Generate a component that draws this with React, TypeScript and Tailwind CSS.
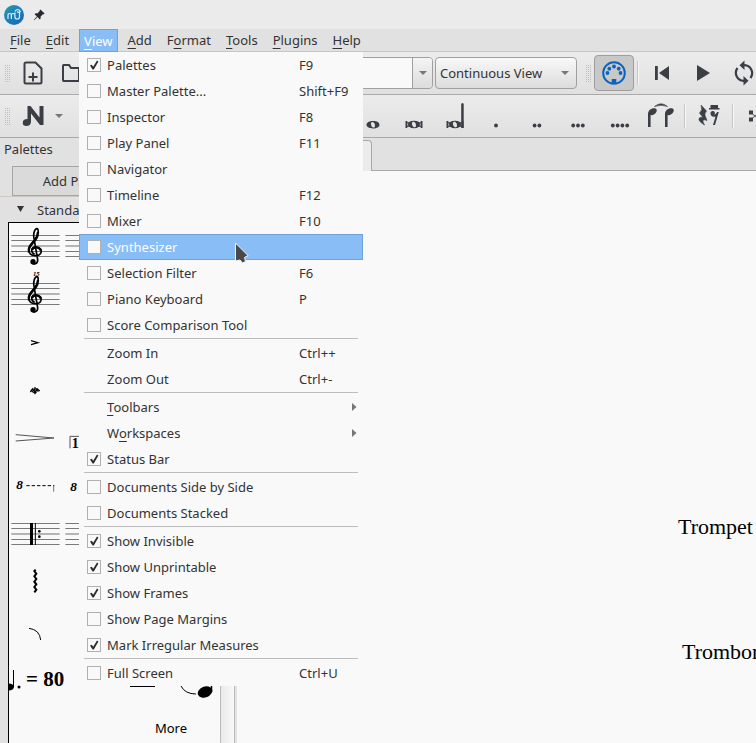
import type { ReactNode } from 'react';
import { BsPinAngleFill } from 'react-icons/bs';

type Entry = { label: string; key?: string; checked?: boolean; active?: boolean; sub?: boolean; plain?: boolean; mnemonic?: number };

const viewMenu: Entry[][] = [
  [
    { label: 'Palettes', key: 'F9', checked: true },
    { label: 'Master Palette...', key: 'Shift+F9' },
    { label: 'Inspector', key: 'F8' },
    { label: 'Play Panel', key: 'F11' },
    { label: 'Navigator' },
    { label: 'Timeline', key: 'F12' },
    { label: 'Mixer', key: 'F10' },
    { label: 'Synthesizer', active: true },
    { label: 'Selection Filter', key: 'F6' },
    { label: 'Piano Keyboard', key: 'P' },
    { label: 'Score Comparison Tool' },
  ],
  [
    { label: 'Zoom In', key: 'Ctrl++', plain: true },
    { label: 'Zoom Out', key: 'Ctrl+-', plain: true },
  ],
  [
    { label: 'Toolbars', plain: true, sub: true, mnemonic: 0 },
    { label: 'Workspaces', plain: true, sub: true, mnemonic: 1 },
    { label: 'Status Bar', checked: true },
  ],
  [{ label: 'Documents Side by Side' }, { label: 'Documents Stacked' }],
  [
    { label: 'Show Invisible', checked: true },
    { label: 'Show Unprintable', checked: true },
    { label: 'Show Frames', checked: true },
    { label: 'Show Page Margins' },
    { label: 'Mark Irregular Measures', checked: true },
  ],
  [{ label: 'Full Screen', key: 'Ctrl+U' }],
];

function Mnemonic({ text, at }: { text: string; at?: number }) {
  if (at === undefined) return <span>{text}</span>;
  return (
    <span>
      {text.slice(0, at)}
      <span className="underline decoration-1 underline-offset-3">{text[at]}</span>
      {text.slice(at + 1)}
    </span>
  );
}

function MenuRow({ entry }: { entry: Entry }) {
  const row = 'grid h-[26px] w-full grid-cols-[20px_192px_1fr_auto] items-center border pl-[7px] pr-[5px] text-left';
  if (entry.plain) {
    return (
      <button type="button" role="menuitem" className={`${row} border-transparent`}>
        <span />
        <Mnemonic text={entry.label} at={entry.mnemonic} />
        <span>{entry.key}</span>
        {entry.sub && (
          <svg width="5" height="8" viewBox="0 0 5 8" aria-hidden="true"><path d="M0 0l4.500 4-4.500 4z" fill="#777" /></svg>
        )}
      </button>
    );
  }
  return (
    <label className={`${row} ${entry.active ? 'border-[#6fa3d8] bg-[#89bdf6] text-white' : 'border-transparent'}`}>
      <span className="grid size-[14px] items-center justify-items-center">
        <input
          type="checkbox"
          defaultChecked={entry.checked}
          className="peer col-start-1 row-start-1 size-[14px] appearance-none border border-[#b0b0b0] bg-[#f9f9f9]"
        />
        <svg className="pointer-events-none invisible col-start-1 row-start-1 peer-checked:visible" width="14" height="14" viewBox="0 0 14 14" aria-hidden="true">
          <path d="M3 7.5L4.8 6.7 6.2 8.8 10 2.6 11.4 3.4 6.8 11.5H5.6Z" fill="#2b2b2b" />
        </svg>
      </span>
      <span>{entry.label}</span>
      <span>{entry.key}</span>
    </label>
  );
}

const menus: { label: string; at: number }[] = [
  { label: 'File', at: 0 },
  { label: 'Edit', at: 0 },
  { label: 'View', at: 0 },
  { label: 'Add', at: 0 },
  { label: 'Format', at: 1 },
  { label: 'Tools', at: 0 },
  { label: 'Plugins', at: 0 },
  { label: 'Help', at: 0 },
];

function MenuBar() {
  return (
    <nav className="flex h-[23px] shrink-0 gap-[5px] border-b border-[#c6c6c6] bg-[#e1e1e1] pl-[5px]">
      {menus.map((m) =>
        m.label === 'View' ? (
          <div key={m.label} className="relative h-[23px]">
            <button type="button" className="h-[23px] border border-[#6fa3d8] bg-[#89bdf6] px-1 text-white">
              <Mnemonic text={m.label} at={m.at} />
            </button>
            <div role="menu" className="absolute left-0 top-full z-10 w-[284px] bg-[#f9f9f9]">
              {viewMenu.map((group, i) => (
                <div key={i}>
                  {i > 0 && <hr className="mx-[5px] mb-px border-[#bdbdbd]" />}
                  {group.map((e) => <MenuRow key={e.label} entry={e} />)}
                </div>
              ))}
              <svg className="absolute left-[155px] top-[189px]" width="16" height="24" viewBox="0 0 16 24" aria-hidden="true">
                <path d="M1.500 2V20L6 19 8.500 22 11.500 20.500 10.500 16.500 14 14.500Z" fill="#4a4a4a" stroke="#f4f4f4" strokeWidth="1" />
              </svg>
            </div>
          </div>
        ) : (
          <button key={m.label} type="button" className="h-[22px] px-[5px]">
            <Mnemonic text={m.label} at={m.at} />
          </button>
        ),
      )}
    </nav>
  );
}

function Grip() {
  return (
    <svg className="shrink-0" width="5" height="17" viewBox="0 0 5 17" aria-hidden="true">
      {[0, 2, 4].map((x) => [0, 2, 4, 6, 8, 10, 12, 14, 16].map((y) => <rect key={`${x}-${y}`} x={x} y={y} width="1" height="1" fill="#bcbcbc" />))}
    </svg>
  );
}

function Divider() {
  return <span className="mx-[3px] h-6 w-[2px] shrink-0 border-l border-[#c6c6c6] bg-[#f8f8f8]" />;
}

function Tool({ label, className = 'w-[41px]', children }: { label: string; className?: string; children: ReactNode }) {
  return (
    <button type="button" aria-label={label} className={`flex h-9 shrink-0 items-center justify-center text-[#3b3e45] ${className}`}>
      {children}
    </button>
  );
}

function Down() {
  return <svg width="8" height="4" viewBox="0 0 8 4" aria-hidden="true"><path d="M0 0h8L4 4z" fill="#777" /></svg>;
}

const toolbar = 'flex h-[43px] shrink-0 items-center overflow-hidden border-b border-[#a9a9a9] bg-linear-to-b from-[#ececec] to-[#e0e0e0] pl-[5px]';

function FileToolbar() {
  return (
    <div className={toolbar}>
      <Grip />
      <Tool label="New" className="ml-1 w-[38px]">
        <svg width="20" height="24" viewBox="0 0 20 24" fill="none" stroke="currentColor" strokeWidth="2">
          <path d="M3 1.500H12.500L18.500 7.500V21Q18.500 22.500 17 22.500H3Q1.500 22.500 1.500 21V3Q1.500 1.500 3 1.500ZM10 11.500V20.500M5.500 16H14.500" />
        </svg>
      </Tool>
      <Tool label="Open" className="w-[38px]">
        <svg width="20" height="20" viewBox="0 0 20 20" fill="none" stroke="currentColor" strokeWidth="2">
          <path d="M2.500 2H8L10 5H18V18H2.500Q2 18 2 17V3Q2 2 2.500 2Z" />
        </svg>
      </Tool>
      <div className="ml-60 flex h-8 w-[103px] shrink-0 overflow-hidden rounded-sm border border-[#a0a0a0]">
        <input type="text" aria-label="Zoom" className="min-w-0 flex-1 bg-[#f9f9f9] px-1" />
        <button type="button" aria-label="Zoom levels" className="flex w-5 items-center justify-center border-l border-[#a0a0a0] bg-linear-to-b from-[#f4f4f4] to-[#dcdcdc]"><Down /></button>
      </div>
      <div className="ml-[2px] grid shrink-0 items-center">
        <select aria-label="View mode" className="col-start-1 row-start-1 h-8 w-[142px] appearance-none rounded-sm border border-[#a0a0a0] bg-linear-to-b from-[#f9f9f9] to-[#dcdcdc] pl-1">
          <option>Continuous View</option>
          <option>Page View</option>
        </select>
        <span className="pointer-events-none col-start-1 row-start-1 mr-2 justify-self-end"><Down /></span>
      </div>
      <span className="w-[9px] shrink-0" />
      <Grip />
      <Tool label="MIDI input" className="ml-[3px] w-10 rounded-sm border border-[#9d9d9d] bg-[#c8c8c8]">
        <svg width="24" height="24" viewBox="0 0 24 24" fill="#0a63bd">
          <circle cx="12" cy="12" r="10.800" fill="none" stroke="#0a63bd" strokeWidth="2" />
          <circle cx="12" cy="5.500" r="1.900" /><circle cx="7.300" cy="7.700" r="1.900" /><circle cx="16.700" cy="7.700" r="1.900" />
          <circle cx="5.500" cy="12" r="1.900" /><circle cx="18.500" cy="12" r="1.900" />
          <path d="M9.700 18H14.300V22H9.700Z" />
        </svg>
      </Tool>
      <Divider />
      <Tool label="Rewind" className="w-[39px]">
        <svg width="14" height="14" viewBox="0 0 14 14" fill="currentColor"><path d="M0 0H2.800V14H0ZM14 0V14L4 7Z" /></svg>
      </Tool>
      <Tool label="Play" className="w-[45px]">
        <svg width="13" height="16" viewBox="0 0 13 16" fill="currentColor"><path d="M0 0L13 8 0 16Z" /></svg>
      </Tool>
      <Tool label="Loop" className="w-[35px]">
        <svg width="20" height="26" viewBox="0 0 20 26" fill="none" stroke="currentColor" strokeWidth="2.200">
          <path d="M9 5.200H10.500A8 8 0 0 1 16.500 18M11 20.800H9.500A8 8 0 0 1 3.500 8" />
          <path d="M10.500 .5L5.500 5.200 10.500 10ZM9.500 16L14.500 20.800 9.500 25.500Z" fill="currentColor" stroke="none" />
        </svg>
      </Tool>
    </div>
  );
}

function NoteIcon({ children, width = 28 }: { children: ReactNode; width?: number }) {
  return <svg width={width} height="28" viewBox={`0 0 ${width} 28`} fill="currentColor">{children}</svg>;
}

function Breve() {
  return (
    <>
      <path fillRule="evenodd" d="M14 18.800C18 18.800 20 20.500 20 22.500S18 26.200 14 26.200 8 24.500 8 22.500 10 18.800 14 18.800ZM13 19.700C11 20.300 12 25.500 15 25.300 17 24.500 16 19.500 13 19.700Z" />
      <path d="M5.500 19H7.300V26H5.500ZM20.700 19H22.500V26H20.700ZM7 20.300H10V21.500H7ZM7 23.600H10V24.800H7ZM18 20.300H21V21.500H18ZM18 23.600H21V24.800H18Z" />
    </>
  );
}

function Dots({ count }: { count: number }) {
  return <NoteIcon>{Array.from({ length: count }, (_, i) => <circle key={i} cx={14 + (i - (count - 1) / 2) * 4.800} cy="23.500" r="1.900" />)}</NoteIcon>;
}

function NoteToolbar() {
  return (
    <div className={toolbar}>
      <Grip />
      <Tool label="Note input" className="ml-1 w-[38px]">
        <svg width="22" height="22" viewBox="0 0 22 22" fill="currentColor">
          <path d="M5.500 1H8.500L17.500 12.500V1H21.500V20H18L9 8.500V17Q8.500 21 4.500 21T.8 18Q.5 14 5.500 14Z" />
        </svg>
      </Tool>
      <button type="button" aria-label="Note input mode" className="flex h-9 w-[14px] shrink-0 items-center justify-center"><Down /></button>
      <Tool label="Whole note" className="ml-[286px] w-[41px]">
        <NoteIcon><path fillRule="evenodd" d="M14 19C18 19 20.500 20.500 20.500 22.700S18 26.400 14 26.400 7.500 24.700 7.500 22.700 10 19 14 19ZM13 19.900C11 20.500 12 25.700 15 25.500 17 24.700 16 19.700 13 19.900Z" /></NoteIcon>
      </Tool>
      <Tool label="Breve"><NoteIcon><Breve /></NoteIcon></Tool>
      <Tool label="Longa"><NoteIcon><Breve /><path d="M20.200 2Q21.500 0 22.700 2V26H20.200Z" /></NoteIcon></Tool>
      <Tool label="Dot"><Dots count={1} /></Tool>
      <Tool label="Double dot"><Dots count={2} /></Tool>
      <Tool label="Triple dot" className="w-[42px]"><Dots count={3} /></Tool>
      <Tool label="Quadruple dot"><Dots count={4} /></Tool>
      <Tool label="Tie">
        <NoteIcon>
          <path d="M7.500 4.500Q14-1 20.500 4.500 14 2 7.500 4.500Z" stroke="currentColor" strokeWidth=".6" />
          <path d="M1 25V12C1 8 5 5.500 8.500 6.500 11.500 8 8.500 12.500 5 13.200L3.600 13V25ZM18 25V12C18 8 22 5.500 25.500 6.500 28.500 8 25.500 12.500 22 13.200L20.600 13V25Z" />
        </NoteIcon>
      </Tool>
      <Divider />
      <Tool label="Rest" className="w-[40px]">
        <NoteIcon>
          <path d="M6 3L11.500 9Q8.500 12 11 16L12 18.500Q7.500 16.500 8 20L9.500 23Q3 19 4 16.500 5.500 14.500 8 15.500L4.500 11Q8 8 6 3Z" stroke="currentColor" strokeWidth=".6" />
          <path d="M14 6H24.500V7.500H14ZM15.500 3H23V6H15.500Z" />
          <path d="M15.500 11.500A2.200 2.200 0 1 1 19.200 12.700Q21 12.300 22.200 10H23.800L20 23H18L20.500 14.500Q16 15.500 15.500 11.500Z" />
        </NoteIcon>
      </Tool>
      <Divider />
      <Tool label="Double sharp" className="w-[35px]">
        <NoteIcon><path d="M8 8.500H12V12L14 13.500 16 12V8.500H20V12.500H16.500L14.500 14 16.500 15.500H20V19.500H16V16L14 14.500 12 16V19.500H8V15.500H11.500L13.500 14 11.500 12.500H8Z" /></NoteIcon>
      </Tool>
    </div>
  );
}

/* Palette cells are drawn in a 162 x 144 space shown at a third of its size. */
function Cell({ children }: { children?: ReactNode }) {
  return <svg className="h-12 w-[54px]" viewBox="0 0 162 144" fill="none" stroke="#000" aria-hidden="true">{children}</svg>;
}

function Staff() {
  return (
    <g stroke="#7a7a7a" strokeWidth="3">
      <path d="M7 37.500H152M7 52.500H152M7 85.500H152M7 100.500H152" />
      <path d="M7 69H152" stroke="#b4b4b4" strokeWidth="6" />
    </g>
  );
}

function Clef() {
  return (
    <>
      <path d="M77 93C65 90 65 73 79 72 93 71 100 82 95 91 89 101 65 101 60 86 56 70 71 58 79 48 89 35 89 19 85 17 77 16 72 32 75 46L86 110C87 124 72 126 68 119" strokeWidth="5" />
      <path d="M60 88C55 72 69 62 79 51 85 43 87 34 87 27M69 80C74 70 91 71 96 83" strokeWidth="7" />
      <circle cx="72" cy="116" r="8" fill="#000" stroke="none" />
    </>
  );
}

const zigzag = Array.from({ length: 9 }, (_, i) => `L${i % 2 ? 82 : 76} ${36 + i * 8}`).join(' ');

const glyph = { fontWeight: 'bold', fontFamily: 'Liberation Serif, serif', fill: '#000', stroke: 'none' } as const;

function PaletteGrid() {
  return (
    <div className="grid grid-cols-[54px_1fr] auto-rows-[48px] text-black">
      <Cell><Staff /><Clef /></Cell><Cell><Staff /></Cell>
      <Cell><Staff /><Clef /><text {...glyph} x="72" y="14" fontSize="20" fontStyle="italic">15</text></Cell><Cell />
      <Cell><path d="M66 65L87 71 66 77" strokeWidth="3.500" /></Cell><Cell />
      <Cell><path d="M64 75L71 66 78 77 85 66 92 72" strokeWidth="4" /><path d="M66 68L74 78M74 65L82 78M81 64L88 74M78 60V82" strokeWidth="3.500" /></Cell><Cell />
      <Cell><path d="M20 59L135 69 20 78" strokeWidth="3" stroke="#555" /></Cell>
      <Cell><path d="M21 100V64H154" strokeWidth="3" stroke="#555" /><text {...glyph} x="26" y="100" fontSize="42">1.</text></Cell>
      <Cell><text {...glyph} x="22" y="79" fontSize="40" fontStyle="italic">8</text><path d="M52 68H136" strokeDasharray="10 6" strokeWidth="3" /><path d="M134 68V86" strokeWidth="3" stroke="#777" /></Cell>
      <Cell><text {...glyph} x="22" y="84" fontSize="40" fontStyle="italic">8</text></Cell>
      <Cell><Staff /><path d="M67.500 36V102" strokeWidth="9" /><path d="M79 36V102" strokeWidth="3" /><circle cx="91" cy="61" r="4" fill="#000" stroke="none" /><circle cx="91" cy="77" r="4" fill="#000" stroke="none" /></Cell><Cell><Staff /></Cell>
      <Cell><path d={`M80 32 ${zigzag}`} strokeWidth="6" /></Cell><Cell />
      <Cell><path d="M60 64Q92 68 95 99" strokeWidth="3" /></Cell><Cell />
      <div className="flex items-center gap-[5px] whitespace-nowrap font-['Liberation_Serif',serif] text-[21px] font-bold">
        <svg className="shrink-0" width="12" height="24" viewBox="0 0 12 24" aria-hidden="true"><ellipse cx="0" cy="20" rx="5" ry="3.500" /><path d="M4.500 3V20" stroke="#000" /><circle cx="10" cy="20" r="1.500" /></svg>
        <span>= 80</span>
      </div>
      <div className="flex items-end justify-end pb-1 pr-[7px]">
        <svg width="86" height="16" viewBox="0 0 86 16" aria-hidden="true"><path d="M3 3.500H28" stroke="#000" /><path d="M54 3Q58 11 69 11" fill="none" stroke="#000" /><path d="M84.500 0V9" stroke="#000" strokeWidth="1.500" /><ellipse cx="78" cy="9" rx="7.500" ry="5.500" transform="rotate(-22 78 9)" /></svg>
      </div>
      <button type="button" className="col-start-2 w-[98px] justify-self-end pt-px">More</button>
    </div>
  );
}

function PalettesPanel() {
  return (
    <aside className="flex w-[237px] shrink-0 bg-[#e1e1e1]">
      <div className="flex min-w-0 flex-1 flex-col">
        <h2 className="h-[22px] pl-1 leading-[22px]">Palettes</h2>
        <div className="border-b border-[#cdc9c1] pl-3 pt-[6px]">
          <button type="button" className="h-[30px] w-[138px] border border-[#a5a5a5] bg-[#dadada]">Add Palettes</button>
        </div>
        <div className="flex min-h-0 flex-1">
          <div className="flex min-w-0 flex-1 flex-col">
            <button type="button" className="flex h-[25px] shrink-0 items-center gap-3 pl-[17px]">
              <svg width="8" height="7" viewBox="0 0 8 7" aria-hidden="true"><path d="M0 0H7L3.500 6Z" fill="#333" /></svg>
              Standard
            </button>
            <div className="ml-2 flex-1 overflow-hidden border-l border-t border-black bg-[#f9f9f9]"><PaletteGrid /></div>
          </div>
          <div className="w-[15px] border-x border-[#bbb] bg-linear-to-r from-[#eaeaea] to-[#f9f9f9]" />
          <div className="w-[2px] bg-[#e3e3e3]" />
        </div>
      </div>
    </aside>
  );
}

function Score() {
  return (
    <main className="flex min-w-0 flex-1 flex-col bg-[#e1e1e1]">
      <div className="flex h-[33px] shrink-0 pt-[2px]">
        <button type="button" aria-label="Score" className="w-[135px] rounded-tr-sm border-r border-t border-[#a9a9a9] bg-[#ebebeb]" />
        <span className="flex-1 border-b border-[#a9a9a9]" />
      </div>
      <div className="flex-1 overflow-hidden whitespace-nowrap bg-[#f9f9f9] pl-[441px] pt-[342px] font-['Liberation_Serif',serif] text-[22px] leading-7 text-black">
        <p>Trompet</p>
        <p className="pl-1 pt-[97px]">Trombon</p>
      </div>
    </main>
  );
}

export default function App() {
  return (
    <div className="flex h-screen flex-col overflow-hidden bg-[#e1e1e1] font-['Noto_Sans',sans-serif] text-[13px] leading-[18px] text-[#333]">
      <header className="flex h-[29px] shrink-0 items-center gap-[9px] bg-[#ebebeb] pl-1">
        <svg width="20" height="20" viewBox="0 0 20 20" aria-hidden="true">
          <defs><linearGradient id="logo" x2="1" y2="1"><stop stopColor="#229ab9" /><stop offset="1" stopColor="#1b63b4" /></linearGradient></defs>
          <circle cx="10" cy="10" r="10" fill="url(#logo)" />
          <path d="M4 14V10.500Q4 8.500 5.700 8.500T7.400 10.500V14M7.400 10.500Q7.400 8.500 9.200 8.500T11 10.500V12Q11 14 13.200 14T15.500 12V7.500M11 9V7.500M11 6.500Q12 4.500 13.700 4.500T16.300 6.500Q14.800 8.200 13 6.500" fill="none" stroke="#d4eef8" strokeWidth="1.200" />
        </svg>
        <BsPinAngleFill size={12} color="#272b31" />
      </header>
      <MenuBar />
      <FileToolbar />
      <NoteToolbar />
      <div className="flex min-h-0 flex-1">
        <PalettesPanel />
        <Score />
      </div>
    </div>
  );
}
